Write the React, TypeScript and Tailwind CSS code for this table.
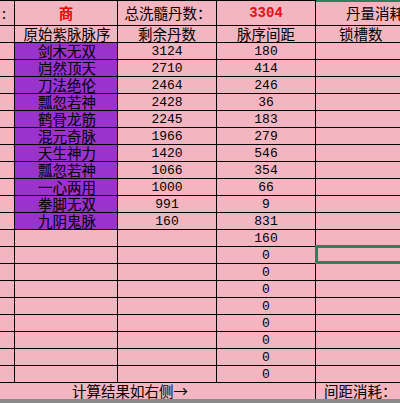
import React from "react";

const cjk = { fontFamily: '"Noto Sans CJK SC", "Noto Sans", sans-serif' };
const mono = { fontFamily: '"Liberation Mono", "Noto Sans CJK SC", monospace' };

const data: [string, string, string][] = [
  ["剑木无双", "3124", "180"],
  ["岿然顶天", "2710", "414"],
  ["刀法绝伦", "2464", "246"],
  ["瓢忽若神", "2428", "36"],
  ["鹤骨龙筋", "2245", "183"],
  ["混元奇脉", "1966", "279"],
  ["天生神力", "1420", "546"],
  ["瓢忽若神", "1066", "354"],
  ["一心两用", "1000", "66"],
  ["拳脚无双", "991", "9"],
  ["九阴鬼脉", "160", "831"],
  ["", "", "160"],
  ["", "", "0"],
  ["", "", "0"],
  ["", "", "0"],
  ["", "", "0"],
  ["", "", "0"],
  ["", "", "0"],
  ["", "", "0"],
  ["", "", "0"],
];

export default function App() {
  return (
    <div
      className="relative w-[400px] h-[403px] overflow-hidden bg-[#f3b6c0] text-black"
      style={cjk}
    >
      {/* header row 1 */}
      <div className="flex h-[26px] border-t border-b border-black text-[14.5px] leading-none">
        <div className="w-[15px] shrink-0 border-r border-black flex items-center pl-[2px]">:</div>
        <div className="w-[103px] shrink-0 border-r border-black flex items-center justify-center font-bold text-[#f00000]">
          商
        </div>
        <div className="w-[99px] shrink-0 border-r border-black flex items-center justify-center whitespace-nowrap pl-[2px]">
          总洗髓丹数：
        </div>
        <div
          className="w-[99px] shrink-0 border-r border-black flex items-center justify-center font-bold text-[#e81010] text-[14px]"
          style={mono}
        >
          3304
        </div>
        <div className="flex-1 min-w-0 flex items-center pl-[30px] whitespace-nowrap">丹量消耗：</div>
      </div>
      {/* header row 2 */}
      <div className="flex h-[17px] border-b border-black text-[14.5px] leading-none">
        <div className="w-[15px] shrink-0 border-r border-black" />
        <div className="w-[103px] shrink-0 border-r border-black flex items-center justify-center whitespace-nowrap pl-[2px]">
          原始紫脉脉序
        </div>
        <div className="w-[99px] shrink-0 border-r border-black flex items-center justify-center whitespace-nowrap">
          剩余丹数
        </div>
        <div className="w-[99px] shrink-0 border-r border-black flex items-center justify-center whitespace-nowrap">
          脉序间距
        </div>
        <div className="flex-1 min-w-0 flex items-center pl-[23px] whitespace-nowrap">锁槽数</div>
      </div>
      {data.map(([name, rem, gap], i) => (
        <div key={i} className="flex h-[17px] border-b border-black leading-none">
          <div className="w-[15px] shrink-0 border-r border-black" />
          <div
            className={
              "w-[103px] shrink-0 border-r border-black flex items-center justify-center text-[14.5px] pl-[2px] whitespace-nowrap " +
              (name ? "bg-[#9a33cc]" : "")
            }
          >
            {name}
          </div>
          <div
            className="w-[99px] shrink-0 border-r border-black flex items-center justify-center text-[13px] pt-[1px]"
            style={mono}
          >
            {rem}
          </div>
          <div
            className="w-[99px] shrink-0 border-r border-black flex items-center justify-center text-[13px] pt-[1px]"
            style={mono}
          >
            {gap}
          </div>
          <div className="flex-1 min-w-0" />
        </div>
      ))}
      {/* bottom row */}
      <div className="flex h-[16px] text-[14.5px] leading-none">
        <div className="w-[316px] shrink-0 border-r border-black flex items-center pl-[72px] whitespace-nowrap">
          计算结果如右侧→
        </div>
        <div className="flex-1 min-w-0 flex items-center pl-[8px] whitespace-nowrap">间距消耗：</div>
      </div>
      <div className="h-[4px] bg-[#8a8a8a]" />

      {/* green line at top of column E */}
      <div className="absolute left-[316px] top-0 w-[90px] h-[2px] bg-[#25845a]" />
      {/* active cell selection */}
      <div className="absolute left-[315px] top-[245px] w-[100px] h-[19px] border-[3px] border-[#25845a]" />
    </div>
  );
}
